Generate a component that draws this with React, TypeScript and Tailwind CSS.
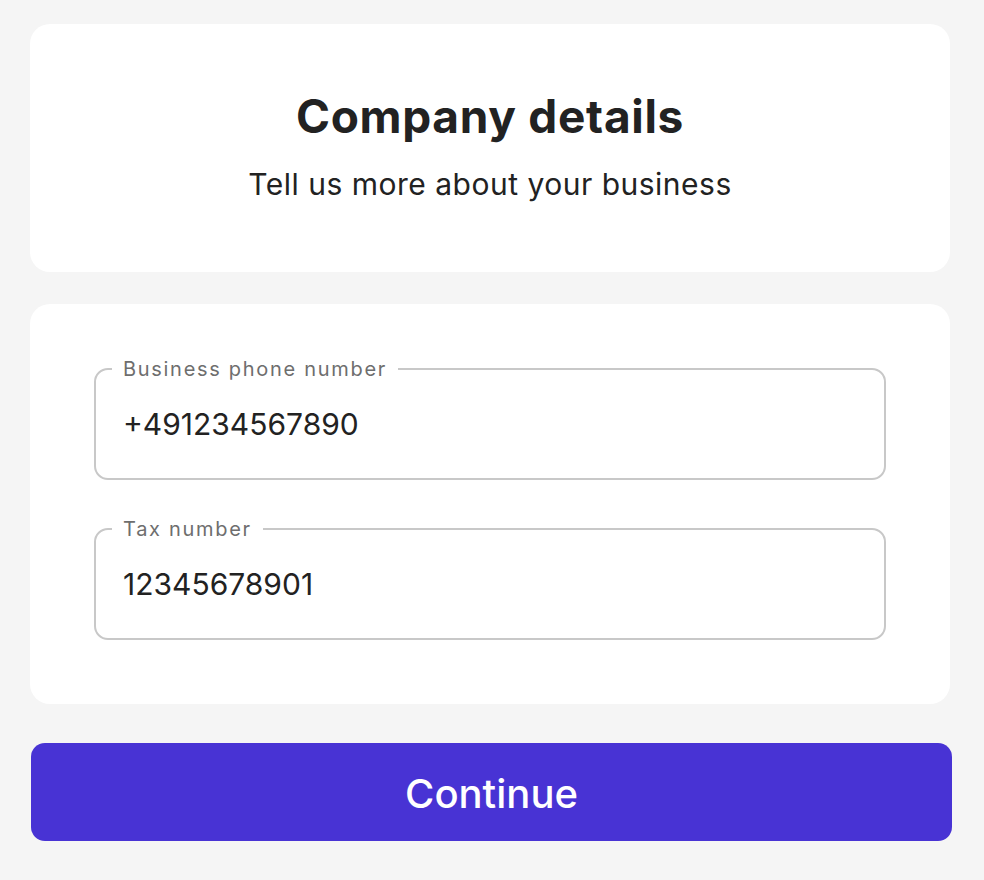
import React from "react";

const fields = [
  { label: "Business phone number", value: "+491234567890" },
  { label: "Tax number", value: "12345678901" },
];

function OutlinedField({ label, value }: { label: string; value: string }) {
  return (
    <fieldset className="m-0 h-[121px] rounded-[14px] border-2 border-[#c8c8c8] pl-[16px] pr-6">
      <legend className="px-[11px] text-[20px] leading-[20px] tracking-[1.7px] text-[#6e6e6e]">
        {label}
      </legend>
      <div className="pl-[11px] pt-[27px] text-[30px] leading-[36px] text-[#222222]">
        {value}
      </div>
    </fieldset>
  );
}

export default function App() {
  return (
    <div
      className="min-h-[880px] bg-[#f5f5f5] px-[30px] pt-6"
      style={{ fontFamily: "Inter, 'Noto Sans', sans-serif" }}
    >
      <section className="flex h-[248px] w-[920px] flex-col items-center justify-center rounded-[20px] bg-white">
        <h1 className="mt-[-5px] text-[46px] font-bold leading-[54px] tracking-[0.7px] text-[#222222]">
          Company details
        </h1>
        <p className="mt-[23px] text-[30px] leading-[36px] tracking-[0.5px] text-[#222222]">
          Tell us more about your business
        </p>
      </section>

      <section className="mt-8 flex h-[400px] w-[920px] flex-col gap-[39px] rounded-[20px] bg-white px-16 pt-[55px]">
        {fields.map((f) => (
          <OutlinedField key={f.label} label={f.label} value={f.value} />
        ))}
      </section>

      <button className="ml-px mt-[39px] flex h-[98px] w-[921px] items-center justify-center rounded-[14px] bg-[#4833d4] pt-1 text-[40px] font-medium text-white">
        Continue
      </button>
    </div>
  );
}
